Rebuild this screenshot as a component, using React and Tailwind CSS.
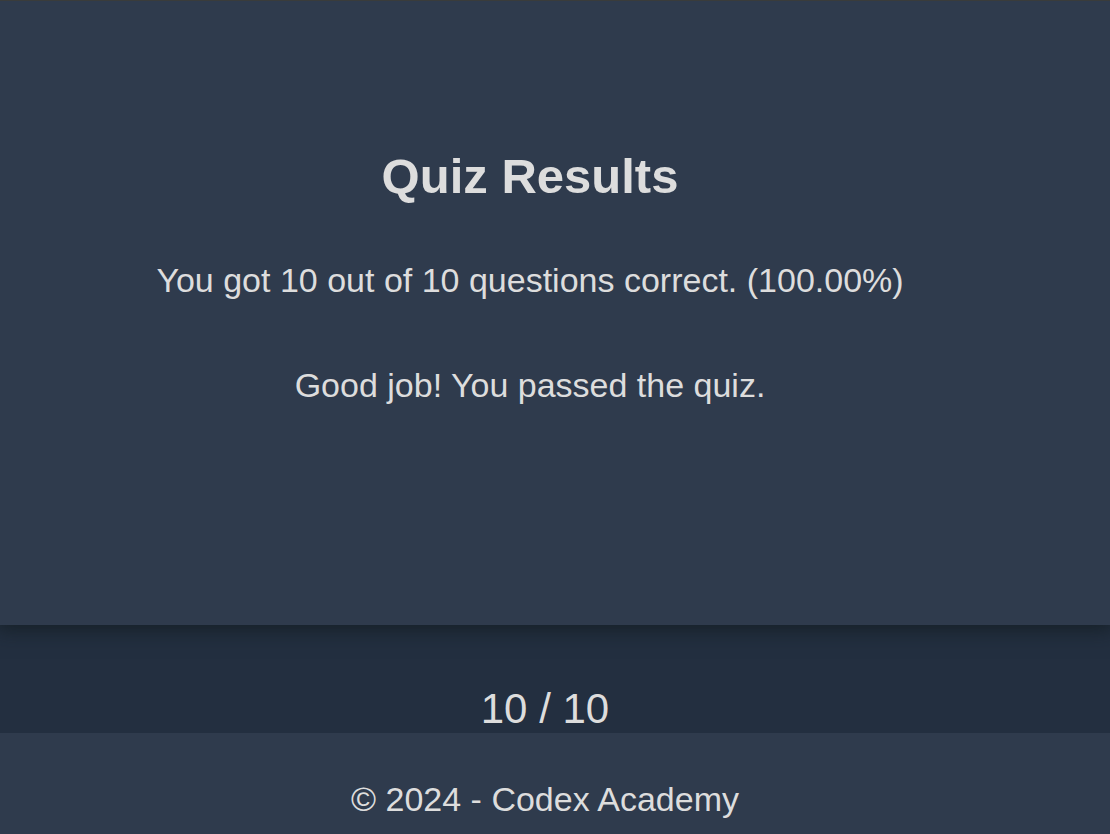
export default function App() {
  return (
    <div className="flex min-h-screen flex-col overflow-x-hidden bg-[#232f40] font-['Liberation_Sans',Arial,sans-serif] text-[#dddddd]">
      <main className="flex flex-1 flex-col">
        <section className="flex flex-1 flex-col items-center border-t border-[#3a3c3b] bg-[#2f3b4d] pt-[145px] pr-[50px] text-center shadow-[0_0_20px_4px_rgba(16,26,28,0.75)]">
          <h1 className="text-[49px] leading-[60px] font-bold">Quiz Results</h1>
          <p className="mt-[54px] text-[34px] leading-[40px]">You got 10 out of 10 questions correct. (100.00%)</p>
          <p className="mt-[65px] text-[34px] leading-[40px]">Good job! You passed the quiz.</p>
        </section>
        <p className="pt-[60px] pr-5 text-center text-[42px] leading-[48px]">10 / 10</p>
      </main>
      <footer className="bg-[#2f3b4d] pt-[46px] pr-5 pb-[15px] text-center text-[34px] leading-[40px]">
        © 2024 - Codex Academy
      </footer>
    </div>
  );
}
